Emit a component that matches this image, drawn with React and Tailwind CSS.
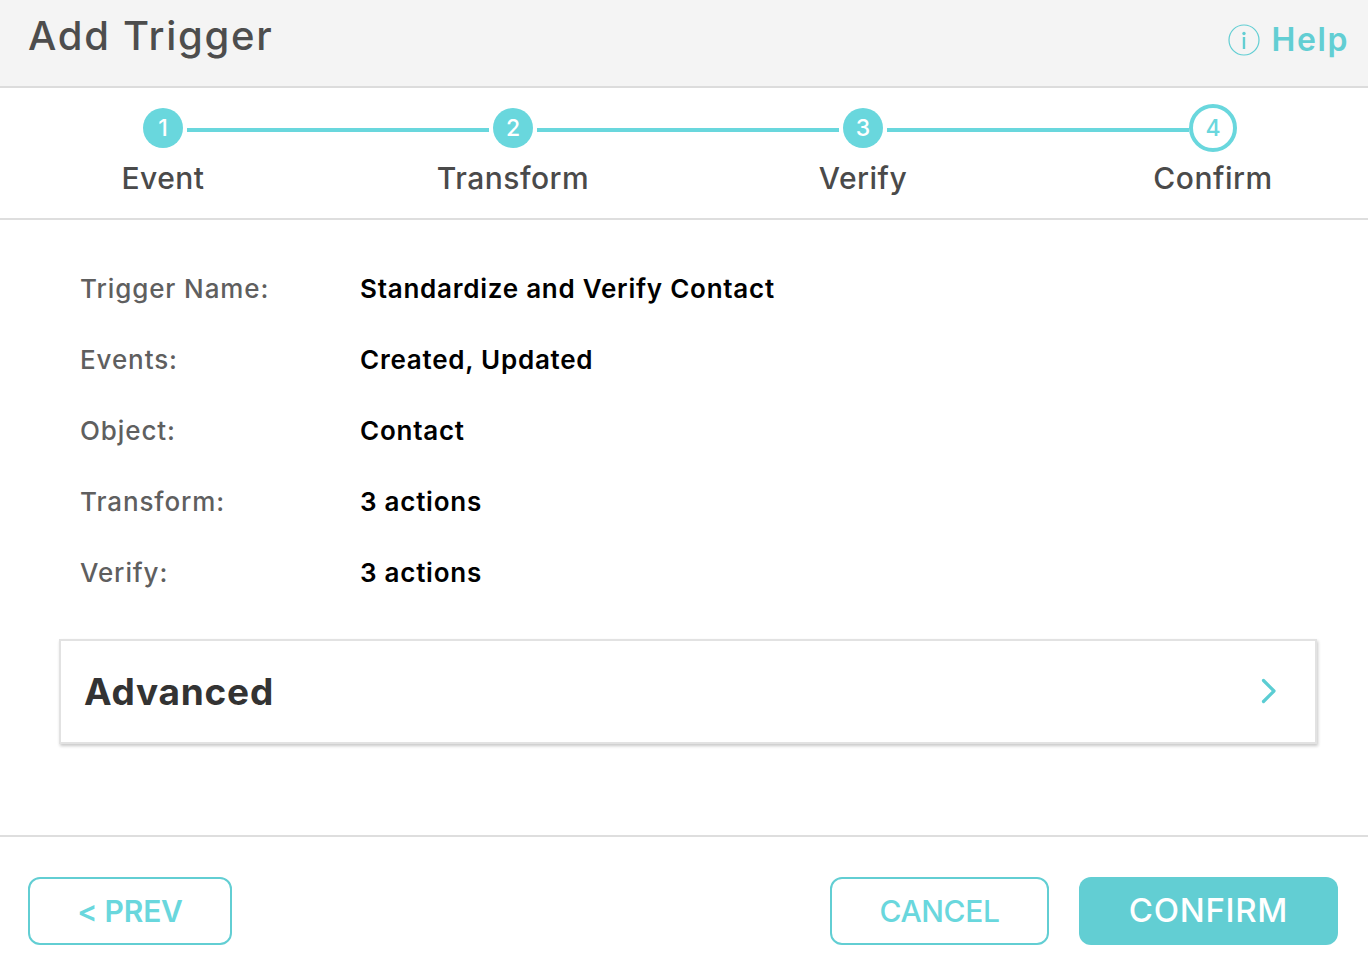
import React from 'react';

const rows = [
  ['Trigger Name:', 'Standardize and Verify Contact'],
  ['Events:', 'Created, Updated'],
  ['Object:', 'Contact'],
  ['Transform:', '3 actions'],
  ['Verify:', '3 actions'],
];

const steps = ['Event', 'Transform', 'Verify', 'Confirm'];

const StepDot = ({ n }) => (
  <div className="w-10 h-10 shrink-0 rounded-full bg-[#69d7dd] text-white flex items-center justify-center text-[23px] font-medium">{n}</div>
);

const StepLine = ({ className }) => <div className={`h-1 mt-1 bg-[#69d7dd] ${className}`} />;

const App = () => {
  return (
    <div className="w-[1368px] h-[968px] bg-white overflow-hidden font-['Inter',sans-serif] text-[#4a4a4a]">
      <div className="h-[88px] bg-[#f4f4f4] border-b-2 border-[#dcdcdc] flex justify-between pl-7 pr-[19px]">
        <h1 className="text-[40px] leading-[72px] font-medium tracking-[1.7px] text-[#4d4d4d]">Add Trigger</h1>
        <div className="flex items-center gap-[11px] pb-[6px] text-[#62ced3]">
          <svg width="32" height="32" viewBox="0 0 32 32" fill="none" stroke="currentColor">
            <circle cx="16" cy="16" r="15" strokeWidth="1.2" />
            <circle cx="16" cy="9.5" r="1.7" fill="currentColor" stroke="none" />
            <rect x="14.8" y="13" width="2.4" height="12" fill="currentColor" stroke="none" />
          </svg>
          <span className="text-[32px] font-semibold tracking-[1.6px]">Help</span>
        </div>
      </div>

      <div className="h-[132px] border-b-2 border-[#dedede]">
        <div className="flex items-center h-[80px] pl-[143px]">
          <StepDot n="1" />
          <StepLine className="w-[302px] mx-1" />
          <StepDot n="2" />
          <StepLine className="w-[302px] mx-1" />
          <StepDot n="3" />
          <StepLine className="w-[302px] ml-1" />
          <div className="w-12 h-12 shrink-0 rounded-full border-4 border-[#69d7dd] text-[#69d7dd] flex items-center justify-center text-[23px] font-medium">4</div>
        </div>
        <div className="flex -ml-3">
          {steps.map((s) => (
            <div key={s} className="w-[350px] shrink-0 text-center text-[30px] leading-[20px] font-medium tracking-[0.5px] text-[#4a4a4a]">{s}</div>
          ))}
        </div>
      </div>

      <div className="pt-[34px] pl-20 flex flex-col">
        {rows.map(([label, value]) => (
          <div key={label} className="flex h-[71px] text-[26px] leading-[70px]">
            <div className="w-[280px] text-[#5f5f5f] font-medium tracking-[0.9px]">{label}</div>
            <div className="text-black font-semibold tracking-[0.75px]">{value}</div>
          </div>
        ))}
      </div>

      <div className="mt-[30px] ml-[59px] mr-[51px] h-[105px] border-2 border-[#e2e2e2] shadow-[1px_2px_3px_rgba(0,0,0,0.22)] flex items-center justify-between pl-[23px] pr-[38px]">
        <span className="text-[37px] font-bold text-[#333333] tracking-[0.75px]">Advanced</span>
        <svg width="16" height="26" viewBox="0 0 16 26" fill="none" stroke="#5bcdd3" strokeWidth="3.2" strokeLinecap="round" strokeLinejoin="round" className="-mt-[2px]">
          <path d="M2.5 2.5 L13 13 L2.5 23.5" />
        </svg>
      </div>

      <div className="mt-[91px] border-t-2 border-[#dedede] flex justify-between pt-10 px-7 pr-[30px]">
        <button className="w-[204px] h-[68px] rounded-xl border-2 border-[#62ced3] text-[#69d7dd] text-[30px] font-semibold tracking-[-0.2px]">&lt; PREV</button>
        <div className="flex gap-[30px]">
          <button className="w-[219px] h-[68px] rounded-xl border-2 border-[#62ced3] text-[#69d7dd] text-[30px] font-medium tracking-[-0.4px]">CANCEL</button>
          <button className="w-[259px] h-[68px] rounded-xl bg-[#62ced3] text-white text-[33px] font-medium tracking-[0.7px]">CONFIRM</button>
        </div>
      </div>
    </div>
  );
};

export default App;
